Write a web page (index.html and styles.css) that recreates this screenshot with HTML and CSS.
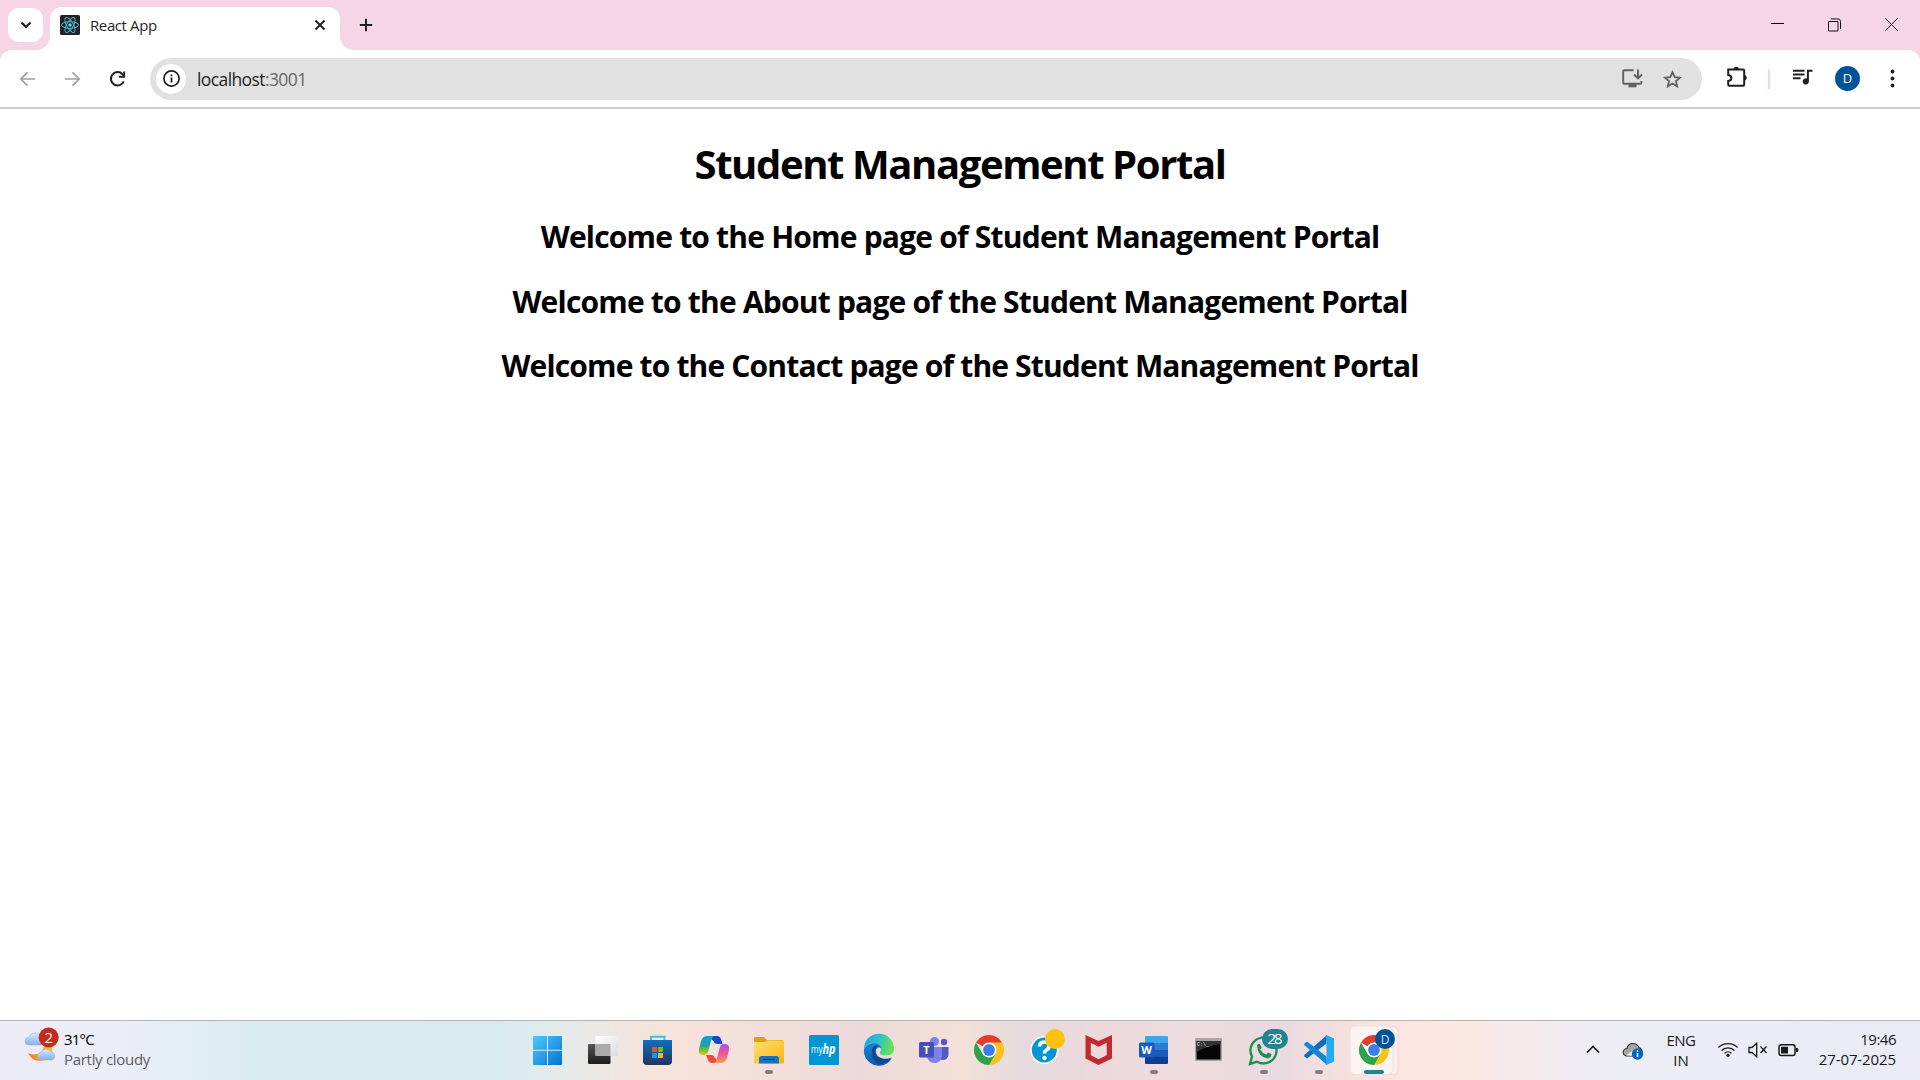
FILE: index.html
```html
<!DOCTYPE html>
<html lang="en">
<head>
<meta charset="utf-8">
<title>React App</title>
<link rel="stylesheet" href="styles.css">
</head>
<body>
<div class="screen">
  <header class="tabstrip">
    <button class="tab-search" aria-label="Search tabs"><svg width="12" height="8" viewBox="0 0 12 8"><path d="M1.5 1.5 6 6l4.500-4.500" fill="none" stroke="#1f1f1f" stroke-width="2.200"/></svg></button>
    <div class="tab">
      <svg class="favicon" width="20" height="20" viewBox="0 0 20 20"><rect width="20" height="20" rx="1.500" fill="#222"/><g fill="none" stroke="#4fb3cc" stroke-width="1"><ellipse cx="10" cy="10" rx="8.500" ry="3.300"/><ellipse cx="10" cy="10" rx="8.500" ry="3.300" transform="rotate(60 10 10)"/><ellipse cx="10" cy="10" rx="8.500" ry="3.300" transform="rotate(120 10 10)"/></g><circle cx="10" cy="10" r="1.700" fill="#61dafb"/></svg>
      <span class="tab-title">React App</span>
      <svg class="tab-close" width="12" height="12" viewBox="0 0 12 12"><path d="m1.500 1.500 9 9m0-9-9 9" stroke="#1f1f1f" stroke-width="1.900"/></svg>
    </div>
    <svg class="new-tab" width="14" height="14" viewBox="0 0 14 14"><path d="M7 .8v12.400M.8 7h12.400" stroke="#1f1f1f" stroke-width="2"/></svg>
    <div class="window-controls">
      <svg width="13" height="13" viewBox="0 0 13 13"><path d="M0 5.500h13" stroke="#000"/></svg>
      <svg width="13" height="14" viewBox="0 0 13 14"><path d="M.5 3.500h9.500v9.500H.5zM3 .9h7a2.500 2.500 0 0 1 2.500 2.500V11" fill="none" stroke="#111"/></svg>
      <svg width="13" height="13" viewBox="0 0 13 13"><path d="m.3.3 12.400 12.400m0-12.400L.3 12.700" stroke="#222"/></svg>
    </div>
  </header>
  <div class="toolbar-back"><nav class="toolbar">
    <div class="nav-buttons">
      <svg width="16" height="16" viewBox="0 0 16 16"><path d="M15 8H1.300M7.500 1.300.8 8l6.700 6.700" fill="none" stroke="#a0a0a0" stroke-width="1.700"/></svg>
      <svg width="16" height="16" viewBox="0 0 16 16"><path d="M0 8h13.700M7.500 1.300 14.200 8l-6.700 6.700" fill="none" stroke="#a0a0a0" stroke-width="1.700"/></svg>
      <svg width="16" height="16" viewBox="0 0 16 16"><path d="M13.800 10.300A6.700 6.700 0 1 1 12.500 3.200L14.500 5.500" fill="none" stroke="#1f1f1f" stroke-width="2"/><path d="M15.100.4v6.300H8.800V4.800h4.400V.4z" fill="#1f1f1f"/></svg>
    </div>
    <div class="omnibox">
      <div class="site-info"><svg width="17" height="17" viewBox="0 0 17 17"><circle cx="8.500" cy="8.500" r="7.600" fill="none" stroke="#1f1f1f" stroke-width="1.700"/><path d="M8.500 7.400v5M8.500 4.400v1.800" stroke="#1f1f1f" stroke-width="1.800"/></svg></div>
      <span class="url">localhost<span class="port">:3001</span></span>
      <svg class="install" width="21" height="19" viewBox="0 0 21 19"><path d="M11.500 1.200H2.300Q1.200 1.200 1.200 2.300V13.700Q1.200 14.800 2.300 14.800H18.300Q19.400 14.800 19.400 13.700V12" fill="none" stroke="#5f6061" stroke-width="1.900"/><path d="M6.500 15h8v3.300h-8z" fill="#5f6061"/><path d="M16 .5v8M12 5.500l4 4 4-4" fill="none" stroke="#5f6061" stroke-width="1.900"/></svg>
      <svg class="star" width="19" height="18" viewBox="0 0 19 18"><path d="m9.500 2.200 2.200 4.900 5.300.5-4 3.500 1.200 5.200-4.700-2.800-4.700 2.800L6 11.100 2 7.600l5.300-.5z" fill="none" stroke="#5f6061" stroke-width="1.800"/></svg>
    </div>
    <svg class="puzzle" width="22" height="21" viewBox="0 0 22 21"><path d="M2.200 3.400H17q1.200 0 1.200 1.200v14q0 1.200-1.200 1.200H3.400q-1.200 0-1.200-1.200v-3.700q3.200-.4 3.200-3t-3.200-3z" fill="none" stroke="#1f1f1f" stroke-width="2"/><path d="M7.500 3.500a2.700 2.700 0 0 1 5.400 0zM18 9a2.700 2.700 0 0 1 0 5.400z" fill="#1f1f1f"/></svg>
    <span class="divider"></span>
    <svg class="media" width="20" height="16" viewBox="0 0 20 16"><path d="M0 1.700h11.500M0 5.500h11.500M0 9.300h7.500" stroke="#1f1f1f" stroke-width="1.900"/><path d="M19.500.8v2h-3.600v9.600a3.100 3.100 0 1 1-2-2.900V.8z" fill="#1f1f1f"/></svg>
    <span class="avatar">D</span>
    <svg class="dots" width="5" height="19" viewBox="0 0 5 19" fill="#1f1f1f"><circle cx="2.500" cy="2.500" r="1.900"/><circle cx="2.500" cy="9.500" r="1.900"/><circle cx="2.500" cy="16.500" r="1.900"/></svg>
  </nav></div>
  <main class="page">
    <h1 class="title">Student Management Portal</h1>
    <h2 class="line home">Welcome to the Home page of Student Management Portal</h2>
    <h2 class="line about">Welcome to the About page of the Student Management Portal</h2>
    <h2 class="line contact">Welcome to the Contact page of the Student Management Portal</h2>
  </main>
  <footer class="taskbar">
    <div class="weather">
      <svg width="40" height="42" viewBox="20 1026 40 42">
        <defs><linearGradient id="cloud" x2="0" y2="1"><stop stop-color="#dcebff"/><stop offset="1" stop-color="#86aee8"/></linearGradient><linearGradient id="moon" x2="1"><stop stop-color="#f07a1c"/><stop offset="1" stop-color="#fbc02d"/></linearGradient></defs>
        <path d="M29 1045a4 4 0 0 1 0-8 6 6 0 0 1 10-2q5 0 5 4l2 6z" fill="url(#cloud)" stroke="#8fb0e0" stroke-width=".6"/>
        <path d="M28 1053q8 4 14-2 2-3 2-6l8 0q2 12-7 15-11 4-17-7z" fill="url(#moon)"/>
        <path d="M41 1060a3.700 3.700 0 0 1 0-7.400 5.500 5.500 0 0 1 9.700-1 4.300 4.300 0 0 1 1 8.400z" fill="url(#cloud)" stroke="#8fb0e0" stroke-width=".6"/>
        <circle cx="48.700" cy="1037.500" r="10" fill="#c42b1c"/>
        <text x="48.700" y="1043" text-anchor="middle" class="badge-text">2</text>
      </svg>
      <div class="weather-text"><span class="temp">31°C</span><span class="sky">Partly cloudy</span></div>
    </div>
    <div class="apps">
      <svg viewBox="520 1021 55 59"><defs><linearGradient id="win" gradientUnits="userSpaceOnUse" x1="533" y1="1036" x2="562" y2="1065"><stop stop-color="#4ccbff"/><stop offset="1" stop-color="#0571d3"/></linearGradient></defs><path d="M533 1037q0-1 1-1h13v13.700h-14zM548 1036h13q1 0 1 1v12.700h-14zM533 1050.700h14v14.300h-13q-1 0-1-1zM548 1050.700h14v13.300q0 1-1 1h-13z" fill="url(#win)"/></svg>
      <svg viewBox="575 1021 55 59"><defs><linearGradient id="tv" x2="0" y2="1"><stop stop-color="#555"/><stop offset="1" stop-color="#1c1c1c"/></linearGradient><linearGradient id="tw" x2="1" y2="1"><stop stop-color="#fff"/><stop offset="1" stop-color="#dcdcdc"/></linearGradient></defs><rect x="588" y="1044" width="22.500" height="20" rx="1" fill="url(#tv)"/><rect x="595.500" y="1036" width="22.500" height="20" rx="1" fill="url(#tw)"/><path d="M595.500 1044h15v12h-15z" fill="#aaa"/></svg>
      <svg viewBox="630 1021 55 59"><defs><linearGradient id="st" x2="0" y2="1"><stop stop-color="#0f6fc0"/><stop offset="1" stop-color="#22355f"/></linearGradient></defs><path d="M651 1041v-4.200h13.500v4.200" fill="none" stroke="#2fc3f5" stroke-width="2"/><path d="M643 1040h29v21q0 4-4 4h-21q-4 0-4-4z" fill="url(#st)"/><path fill="#f25022" d="M652 1047h5v5h-5z"/><path fill="#7fba00" d="M658 1047h5v5h-5z"/><path fill="#00a4ef" d="M652 1053h5v5h-5z"/><path fill="#ffb900" d="M658 1053h5v5h-5z"/></svg>
      <svg viewBox="685 1021 55 59"><defs><linearGradient id="ca" x2="0" y2="1"><stop stop-color="#189bdf"/><stop offset=".5" stop-color="#1aa6a0"/><stop offset=".75" stop-color="#7dba3a"/><stop offset="1" stop-color="#f2c50f"/></linearGradient><linearGradient id="cb" x2="0" y2="1"><stop stop-color="#a052e8"/><stop offset=".5" stop-color="#ee5796"/><stop offset="1" stop-color="#ff9a5a"/></linearGradient></defs><path d="M708 1036h9q3 0 4 3l1.500 5h-5q-3 0-4-3z" fill="#1448c8"/><path d="M720 1063h-8q-3 0-4-3l-2-5h5q3 0 4 3z" fill="#f04a3a"/><path d="M707 1036h7q-2 1-3 5l-3 11q-1 3-4 3h-1q-5 0-4-6l2-8q2-5 6-5z" fill="url(#ca)"/><path d="M721 1063h-7q2-1 3-5l3-11q1-3 4-3h1q5 0 4 6l-2 8q-2 5-6 5z" fill="url(#cb)"/></svg>
      <svg viewBox="740 1021 55 59"><defs><linearGradient id="fo" x2="1" y2="1"><stop stop-color="#ffdf75"/><stop offset="1" stop-color="#f8b40e"/></linearGradient></defs><path d="M754 1045v-7q0-1 1-1h9l3 3h16v5z" fill="#dfa00b"/><path d="M754 1042h10l3-1.500h17V1062q0 1.500-1.500 1.500H755q-1 0-1-1.500z" fill="url(#fo)"/><path d="M759 1063.500v-5q0-2.500 2.500-2.500h15q2.500 0 2.500 2.500v5z" fill="#1373c4"/><path d="M763 1059.500h12" stroke="#0a3d86" stroke-width="1.200"/><rect x="765" y="1070" width="8" height="4" rx="2" fill="#857c7b"/></svg>
      <svg viewBox="795 1021 55 59"><rect x="809" y="1035" width="30" height="30" rx="1.500" fill="#0096d6"/><text x="811" y="1053" class="my" textLength="11.500" lengthAdjust="spacingAndGlyphs">my</text><text x="822.500" y="1054" class="hp" textLength="13" lengthAdjust="spacingAndGlyphs">hp</text></svg>
      <svg viewBox="850 1021 55 59"><defs><linearGradient id="ea" x2="1" y2=".3"><stop stop-color="#1a9ee2"/><stop offset=".5" stop-color="#2bbfd0"/><stop offset="1" stop-color="#67df56"/></linearGradient><linearGradient id="eb" x2="0" y2="1"><stop stop-color="#1685d8"/><stop offset="1" stop-color="#0f5cae"/></linearGradient></defs><path d="M864 1049a15 15 0 0 1 30-.5q0 7-8 7-7 0-6-3 3-6-4-9-8-2-12 5.500z" fill="url(#ea)"/><path d="M864 1049q4-7 11-6 5 1 7 5-6-2-6.500 4 .5 7 8.500 9 5 0 8-3a15 15 0 0 1-28-9z" fill="url(#eb)"/><path d="M872.500 1048q-4 9 6 16.500 9 0 13-7-4 2-9 1-7-2-7-8 0-3 3-4.500-4-2-6 2z" fill="#0c4a92"/></svg>
      <svg viewBox="905 1021 55 59"><circle cx="934.500" cy="1041.500" r="4.500" fill="#7b83eb"/><circle cx="944" cy="1042" r="3.200" fill="#5059c9"/><path d="M938 1047h10.500v8q-1 5-5.500 5t-5-5z" fill="#5059c9"/><path d="M927 1047h15v9q-1 7-7.500 7t-7.500-7z" fill="#7b83eb"/><rect x="919" y="1042" width="15" height="15.500" rx="1.500" fill="#4650b8"/><text x="926.500" y="1054" text-anchor="middle" class="glyph">T</text></svg>
      <svg viewBox="960 1021 55 59"><g id="chrome"><path d="M989 1050 976 1042.500a15 15 0 0 1 26 0z" fill="#e33b2e"/><path d="M989 1050v15a15 15 0 0 0 13-22.500H989z" fill="#fcc21b"/><path d="M989 1050l6.500 4-6.500 11a15 15 0 0 1-13-22.500l6.500 11.200z" fill="#2ba24c"/><circle cx="989" cy="1050" r="7.500" fill="#fff"/><circle cx="989" cy="1050" r="5.900" fill="#3b7ded"/></g></svg>
      <svg viewBox="1015 1021 55 59"><circle cx="1044.300" cy="1050" r="14" fill="#fff"/><circle cx="1044.300" cy="1050" r="12.500" fill="#0096d6"/><path d="M1039.500 1046.500q0-4.500 4.800-4.500t4.800 4q0 2.500-2.600 4-2 1.200-2 3.500" fill="none" stroke="#fff" stroke-width="3.600"/><circle cx="1044.500" cy="1058" r="2.200" fill="#fff"/><circle cx="1055" cy="1039" r="10" fill="#ffc20e"/></svg>
      <svg viewBox="1070 1021 55 59"><path d="m1085.500 1035 13 6 13.500-6v23.500l-13.500 6.500-13-6.500zm5.300 7.800v12.500l7.700 4 8.200-4v-12.500l-8.200 4z" fill="#c12b2e" fill-rule="evenodd"/></svg>
      <svg viewBox="1125 1021 55 59"><path d="M1146 1036h21q1 0 1 1v6.500h-23V1037q0-1 1-1z" fill="#41a5ee"/><path d="M1145 1043h23v7.500h-23z" fill="#2b7cd3"/><path d="M1145 1050h23v7.500h-23z" fill="#185abd"/><path d="M1145 1057h23v6q0 1-1 1h-21q-1 0-1-1z" fill="#103f91"/><rect x="1139" y="1042.500" width="15.500" height="15" rx="1.500" fill="#185abd"/><text x="1146.500" y="1054" text-anchor="middle" class="glyph">W</text><rect x="1150" y="1070" width="8" height="4" rx="2" fill="#857c7b"/></svg>
      <svg viewBox="1180 1021 55 59"><rect x="1195" y="1038" width="27" height="23" rx="1" fill="#aaa6a8"/><path d="M1196.500 1041h24v18.500h-24z" fill="#050505"/><path d="M1196.500 1041h24v3q-14 2-24 8z" fill="#333"/><text x="1197" y="1046" class="prompt">C:\_</text></svg>
      <svg viewBox="1235 1021 55 59"><path d="m1250 1064 2-7.500a13 13 0 1 1 5 5.200z" fill="none" stroke="#1d8f50" stroke-width="2.400"/><path d="M1257 1045.500q1-2.500 3-1.500l1.700 3.500-1.500 2q2 3.700 6 5l2-2 3.300 1.800q0 3.500-4 4.200-9.500-1.500-10.500-13z" fill="#1d8f50"/><rect x="1262" y="1029" width="26" height="20" rx="10" fill="#23828f"/><text x="1275" y="1044.300" text-anchor="middle" class="badge-text" textLength="15">28</text><rect x="1260" y="1070" width="8" height="4" rx="2" fill="#857c7b"/></svg>
      <svg viewBox="1290 1021 55 59"><path d="m1326.500 1043.500-19.500 15-2.500-2q-.7-.8 0-1.700L1327 1035z" fill="#0b70bb"/><path d="m1326.500 1056.500-19.500-15-2.500 2q-.7.800 0 1.700L1327 1065z" fill="#1188d2"/><path d="m1326.500 1035 7.500 3.500v23l-7.500 3.500-1.500-1q1.500 0 1.500-2v-24q0-2-1.500-2z" fill="#25a9f2"/><rect x="1315" y="1070" width="8" height="4" rx="2" fill="#857c7b"/></svg>
      <svg viewBox="1345 1021 55 59"><rect x="1352" y="1026.500" width="46" height="48" rx="5" fill="#fbeeec" stroke="#eadbd9"/><rect x="1350" y="1026" width="43" height="48.500" rx="5" fill="#fbf4f3" stroke="#eadfdd" stroke-width=".8"/><use href="#chrome" x="385"/><circle cx="1385" cy="1039" r="10" fill="#00539b"/><text x="1385" y="1043.500" text-anchor="middle" class="user">D</text><rect x="1364" y="1070" width="20" height="4" rx="2" fill="#23828f"/></svg>
    </div>
    <div class="tray">
      <svg class="up" width="14" height="9" viewBox="0 0 14 9"><path d="m1 7.500 6-6 6 6" fill="none" stroke="#1a1a1a" stroke-width="1.700"/></svg>
      <svg class="onedrive" width="21" height="18" viewBox="1623 1042 21 18"><path d="M1627 1056a3.700 3.700 0 0 1 0-7.500q1-5 6-5 4 0 6 4 3 1 3 4.500t-4 4z" fill="#a5a5a5" stroke="#333" stroke-width="1.200"/><path d="m1626 1055.500 9-6.500h5v7z" fill="#eee"/><circle cx="1637.500" cy="1054" r="5.700" fill="#0067c0"/><path d="M1637.500 1053v4M1637.500 1050.300v1.500" stroke="#fff" stroke-width="1.500"/></svg>
      <div class="lang"><span class="eng">ENG</span><span>IN</span></div>
      <svg class="status" width="82" height="18" viewBox="1717 1041 82 18" fill="none" stroke="#1a1a1a" stroke-width="1.300"><path d="M1718.500 1047.500a13.500 13.500 0 0 1 19 0M1721.500 1050.500a9.200 9.200 0 0 1 13 0M1724.500 1053.300a5 5 0 0 1 7 0"/><circle cx="1728" cy="1055.300" r="1.600" fill="#1a1a1a" stroke="none"/><path d="M1749 1047.500h3l4.700-4.300v13.600l-4.700-4.300h-3zM1760.500 1046.500l6 6.500m0-6.500-6 6.500"/><rect x="1779" y="1044.700" width="16" height="10.800" rx="2.300" stroke-width="1.500"/><path d="M1781 1046.700h7v6.800h-7zM1796 1048h1.500q.8 0 .8 2t-.8 2h-1.500z" fill="#1a1a1a" stroke="none"/></svg>
      <div class="clock"><span class="time">19:46</span><span class="date">27-07-2025</span></div>
    </div>
  </footer>
</div>
</body>
</html>
```
FILE: styles.css
```css
* { box-sizing: border-box; }
body { margin: 0; font-family: "Open Sans", "Noto Sans", sans-serif; background: #fff; color: #000; }
svg { display: block; flex: none; overflow: visible; }
.screen { display: flex; flex-direction: column; width: 1920px; height: 1080px; overflow: hidden; }

.tabstrip { display: flex; height: 50px; background: #f6d5e4; padding: 8px 0 0 8px; }
.tab-search { display: flex; align-items: center; justify-content: center; width: 35px; height: 34px; padding: 0; border: 0; border-radius: 11px; background: #fff; }
.tab { position: relative; display: flex; align-items: center; width: 290px; height: 43px; margin: -1px 0 0 7px; padding: 0 14px 7px 10px; border-radius: 12px 12px 0 0; background: #fff; }
.tab::before, .tab::after { content: ""; position: absolute; bottom: 0; width: 13px; height: 13px; }
.tab::before { left: -13px; background: radial-gradient(circle at 0 0, transparent 12.500px, #fff 13px); }
.tab::after { right: -13px; background: radial-gradient(circle at 100% 0, transparent 12.500px, #fff 13px); }
.tab-title { margin-left: 10px; font-size: 15px; letter-spacing: -.4px; color: #1f1f1f; flex: 1; white-space: nowrap; }
.new-tab { margin: 10px 0 0 19px; }
.window-controls { display: flex; gap: 44px; margin: 10px 22px 0 auto; }

.toolbar-back { background: #f6d5e4; }
.toolbar { display: flex; align-items: center; height: 59px; padding: 0 25px 0 20px; background: #fff; border-bottom: 2px solid #cbcbcb; border-radius: 12px 12px 0 0; }
.nav-buttons { display: flex; gap: 29px; }
.omnibox { display: flex; align-items: center; width: 1553px; height: 42px; margin-left: 24px; padding: 0 20px 0 6px; border-radius: 21px; background: #e1e1e1; }
.site-info { display: flex; align-items: center; justify-content: center; width: 30px; height: 30px; border-radius: 50%; background: #fff; }
.url { flex: 1; margin-left: 11px; padding-top: 1px; font-size: 17.500px; letter-spacing: -.6px; color: #1f1f1f; }
.port { color: #666; }
.star { margin-left: 20px; }
.puzzle { margin: -4px 0 0 24px; }
.divider { width: 2px; height: 20px; margin-left: 20px; background: #f6d5e4; }
.media { margin: -3px 0 0 23px; }
.avatar { width: 25px; height: 25px; margin-left: 22px; border-radius: 50%; background: #00539b; color: #fff; font-size: 13px; line-height: 25px; text-align: center; }
.dots { margin-left: 30px; }

.page { flex: 1; text-align: center; padding-top: 28px; min-height: 0; }
.title { margin: 0 0 26px; font-size: 40px; line-height: 54px; font-weight: 700; letter-spacing: -1.400px; }
.line { margin: 0 0 25px; font-size: 30px; line-height: 39.500px; font-weight: 700; letter-spacing: -.8px; }
.contact { letter-spacing: -.84px; }

.taskbar { display: flex; height: 60px; border-top: 1px solid #b7b4b9; background: linear-gradient(90deg, #ecebf7 0, #ebeef7 120px, #d8ecf1 260px, #d7ebf1 480px, #e0ebed 540px, #f7e4da 660px, #f3dfda 760px, #ecdada 860px, #f3e0d8 960px, #e4dade 1030px, #edd9dc 1100px, #efdcdd 1200px, #e7dae1 1270px, #f5dfde 1340px, #fce5e1 1400px, #fbe8e5 1470px, #efedf3 1580px, #ebedf6 1700px, #eaebf5 100%); }
.weather { display: flex; width: 520px; padding: 5px 0 0 20px; }
.weather-text { display: flex; flex-direction: column; margin-left: 4px; font-size: 15px; line-height: 20px; padding-top: 3px; }
.temp { letter-spacing: -.8px; }
.sky { color: #5c5c62; letter-spacing: -.3px; }
.badge-text { font-size: 15px; fill: #fff; }
.apps { display: flex; width: 880px; }
.apps svg { width: 55px; height: 59px; }
.my { font-size: 10px; fill: #fff; }
.hp { font-size: 14px; font-weight: 700; font-style: italic; fill: #fff; }
.glyph { font-size: 11px; font-weight: 700; fill: #fff; }
.prompt { font-family: "Liberation Mono", monospace; font-size: 5px; fill: #fff; }
.user { font-size: 12px; fill: #d6e6f5; }
.tray { display: flex; flex: 1; padding-right: 24px; font-size: 15px; line-height: 20px; color: #1a1a1a; }
.up { margin: 24px 0 0 186px; }
.onedrive { margin: 21px 0 0 23px; }
.lang { display: flex; flex-direction: column; align-items: center; width: 30px; margin: 9px 0 0 22px; }
.eng { letter-spacing: -.5px; }
.status { margin: 20px 0 0 21px; }
.clock { display: flex; flex-direction: column; align-items: flex-end; margin: 8px 0 0 auto; }
.time { letter-spacing: -.5px; }
.date { letter-spacing: -.1px; }
```
